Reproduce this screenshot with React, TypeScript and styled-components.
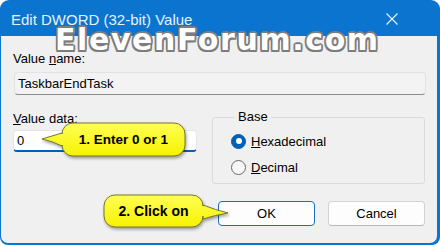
import React from 'react';
import styled, { createGlobalStyle } from 'styled-components';

const GlobalStyle = createGlobalStyle`
  html, body {
    margin: 0;
    padding: 0;
    background: #ffffff;
  }
  body {
    font-family: 'Liberation Sans', Arial, sans-serif;
    color: #000000;
  }
`;

const Window = styled.div`
  position: relative;
  box-sizing: border-box;
  width: 440px;
  height: 245px;
  display: flex;
  flex-direction: column;
  background: #0a74cf;
  border-radius: 9px 9px 8px 8px;
  padding: 0 3px 2px 1px;
  overflow: hidden;
`;

const TitleBar = styled.div`
  flex: none;
  height: 36px;
  display: flex;
  align-items: center;
  justify-content: space-between;
  padding: 2px 0 0 10px;
  box-sizing: border-box;
  color: #e6f2fc;
  font-size: 15px;
`;

const CloseButton = styled.div`
  width: 46px;
  height: 30px;
  margin-right: 22px;
  display: flex;
  align-items: center;
  justify-content: center;
`;

const Body = styled.div`
  flex: 1;
  background: #f0f0f0;
  border-radius: 0 0 7px 7px;
  padding: 15px 11px 0 12px;
  display: flex;
  flex-direction: column;
`;

const Label = styled.div`
  font-size: 13px;
  line-height: 16px;
`;

const Field = styled.div<{ $readOnly?: boolean }>`
  box-sizing: border-box;
  height: ${(p) => (p.$readOnly ? 23 : 22)}px;
  margin: ${(p) => (p.$readOnly ? '5px 0 0 1px' : '3px 0 0 0')};
  display: flex;
  align-items: center;
  padding-left: 3px;
  font-size: 13px;
  background: ${(p) => (p.$readOnly ? '#f3f3f3' : '#ffffff')};
  border: 1px solid ${(p) => (p.$readOnly ? '#e2e2e2' : '#e6e6e6')};
  border-bottom: ${(p) => (p.$readOnly ? '1px solid #8d8d8d' : '2px solid #005fb8')};
  border-radius: 4px;
`;

const DataRow = styled.div`
  margin-top: 16px;
  display: grid;
  grid-template-columns: 184px 1fr;
  column-gap: 15px;
  align-items: start;
`;

const GroupBox = styled.fieldset`
  margin: -2px 1px 0 0;
  min-width: 0;
  padding: 5px 0 5px 18px;
  border: 1px solid #dadada;
  border-radius: 3px;
  display: flex;
  flex-direction: column;
  gap: 4px;
`;

const Legend = styled.legend`
  font-size: 13px;
  line-height: 16px;
  padding: 0 3px;
  margin-left: 4px;
`;

const RadioRow = styled.div`
  height: 22px;
  display: flex;
  align-items: center;
  gap: 5px;
  font-size: 13px;
`;

const RadioDot = styled.span<{ $checked?: boolean }>`
  box-sizing: border-box;
  width: 15px;
  height: 15px;
  border-radius: 50%;
  display: flex;
  align-items: center;
  justify-content: center;
  background: ${(p) => (p.$checked ? '#005fb8' : '#f7f7f7')};
  border: 1px solid ${(p) => (p.$checked ? '#005fb8' : '#6b6b6b')};

  &::after {
    content: '';
    display: ${(p) => (p.$checked ? 'block' : 'none')};
    width: 6px;
    height: 6px;
    border-radius: 50%;
    background: #ffffff;
  }
`;

const ButtonRow = styled.div`
  margin-top: 17px;
  display: flex;
  justify-content: flex-end;
  gap: 13px;
  padding-right: 1px;
`;

const Button = styled.div<{ $default?: boolean }>`
  box-sizing: border-box;
  width: 97px;
  height: 25px;
  display: flex;
  align-items: center;
  justify-content: center;
  font-size: 13px;
  background: #fdfdfd;
  border: 1px solid ${(p) => (p.$default ? '#1a6cc0' : '#d2d2d2')};
  border-bottom-color: ${(p) => (p.$default ? '#1a6cc0' : '#b8b8b8')};
  border-radius: 4px;
`;

const Watermark = styled.div`
  position: absolute;
  left: 55px;
  top: 25px;
  font-family: 'DejaVu Sans', Verdana, sans-serif;
  font-weight: 700;
  font-size: 30px;
  line-height: 30px;
  letter-spacing: 1.6px;
  color: #ffffff;
  white-space: nowrap;
  text-shadow:
    -1.5px -1.5px 0 #7d7d7d,
    1.5px -1.5px 0 #7d7d7d,
    -1.5px 1.5px 0 #7d7d7d,
    1.5px 1.5px 0 #7d7d7d,
    0 -1.7px 0 #7d7d7d,
    0 1.7px 0 #7d7d7d,
    -1.7px 0 0 #7d7d7d,
    1.7px 0 0 #7d7d7d;
`;

const CalloutBox = styled.div<{ $left: number; $top: number; $w: number; $h: number }>`
  position: absolute;
  left: ${(p) => p.$left}px;
  top: ${(p) => p.$top}px;
  width: ${(p) => p.$w}px;
  height: ${(p) => p.$h}px;
  display: flex;
  align-items: center;
  justify-content: center;
`;

const CalloutShape = styled.svg`
  position: absolute;
  left: 0;
  top: 0;
  overflow: visible;
  filter: drop-shadow(1.5px 2px 1.5px rgba(0, 0, 0, 0.35));
`;

const CalloutText = styled.span<{ $size: number }>`
  position: relative;
  font-weight: 700;
  font-size: ${(p) => p.$size}px;
  color: #000000;
  white-space: nowrap;
`;

type CalloutProps = {
  left: number;
  top: number;
  w: number;
  h: number;
  side: 'left' | 'right';
  tip: [number, number];
  base: [number, number];
  size: number;
  children: React.ReactNode;
};

const bubblePath = (w: number, h: number, r: number, side: string, tip: [number, number], base: [number, number]) => {
  const [tx, ty] = tip;
  const [b1, b2] = base;
  if (side === 'left') {
    return `M ${r},0 H ${w - r} A ${r} ${r} 0 0 1 ${w},${r} V ${h - r} A ${r} ${r} 0 0 1 ${w - r},${h} H ${r} A ${r} ${r} 0 0 1 0,${h - r} V ${b2} Q ${tx / 2},${ty + 2} ${tx},${ty} Q ${tx / 2},${ty - 3} 0,${b1} V ${r} A ${r} ${r} 0 0 1 ${r},0 Z`;
  }
  return `M ${r},0 H ${w - r} A ${r} ${r} 0 0 1 ${w},${r} V ${b1} Q ${(w + tx) / 2},${ty - 3} ${tx},${ty} Q ${(w + tx) / 2},${ty + 2} ${w},${b2} V ${h - r} A ${r} ${r} 0 0 1 ${w - r},${h} H ${r} A ${r} ${r} 0 0 1 0,${h - r} V ${r} A ${r} ${r} 0 0 1 ${r},0 Z`;
};

const Callout = ({ left, top, w, h, side, tip, base, size, children }: CalloutProps) => (
  <CalloutBox $left={left} $top={top} $w={w} $h={h}>
    <CalloutShape width={w} height={h}>
      <defs>
        <linearGradient id={`cg-${left}`} x1="0" y1="0" x2="0" y2="1">
          <stop offset="0" stopColor="#ffff55" />
          <stop offset="1" stopColor="#f6f200" />
        </linearGradient>
      </defs>
      <path
        d={bubblePath(w, h, 11, side, tip, base)}
        fill={`url(#cg-${left})`}
        stroke="#76762a"
        strokeWidth={1}
      />
    </CalloutShape>
    <CalloutText $size={size}>{children}</CalloutText>
  </CalloutBox>
);

const App: React.FC = () => (
  <>
    <GlobalStyle />
    <Window>
      <TitleBar>
        <span>Edit DWORD (32-bit) Value</span>
        <CloseButton>
          <svg width="12" height="12" viewBox="0 0 12 12">
            <path d="M0.5 0.5 L11.5 11.5 M11.5 0.5 L0.5 11.5" stroke="#eaf4fc" strokeWidth="1.1" />
          </svg>
        </CloseButton>
      </TitleBar>
      <Body>
        <Label>
          Value <u>n</u>ame:
        </Label>
        <Field $readOnly>TaskbarEndTask</Field>
        <DataRow>
          <div>
            <Label>
              <u>V</u>alue data:
            </Label>
            <Field>0</Field>
          </div>
          <GroupBox>
            <Legend>Base</Legend>
            <RadioRow>
              <RadioDot $checked />
              <span>
                <u>H</u>exadecimal
              </span>
            </RadioRow>
            <RadioRow>
              <RadioDot />
              <span>
                <u>D</u>ecimal
              </span>
            </RadioRow>
          </GroupBox>
        </DataRow>
        <ButtonRow>
          <Button $default>OK</Button>
          <Button>Cancel</Button>
        </ButtonRow>
      </Body>
      <Watermark>ElevenForum.com</Watermark>
      <Callout left={62} top={123} w={123} h={33} side="left" tip={[-20, 16]} base={[10, 23]} size={13.5}>
        1. Enter 0 or 1
      </Callout>
      <Callout left={104} top={195} w={99} h={32} side="right" tip={[124, 18]} base={[10, 24]} size={14}>
        2. Click on
      </Callout>
    </Window>
  </>
);

export default App;
